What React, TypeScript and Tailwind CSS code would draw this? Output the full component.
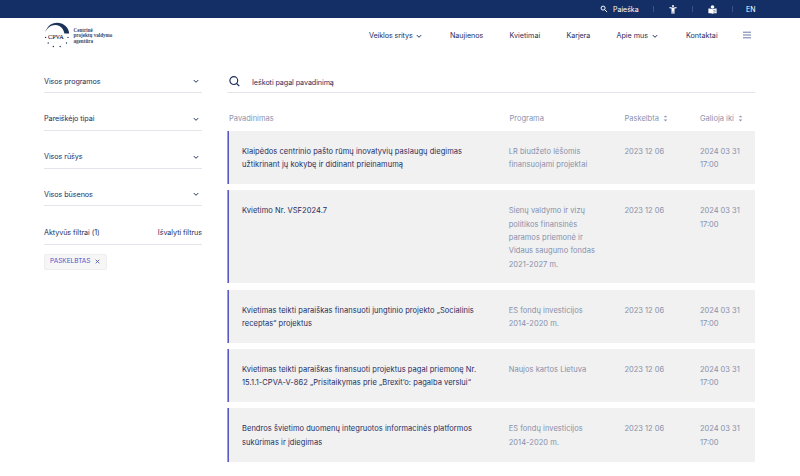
import React from "react";

const calls = [
  {
    title: ["Klaipėdos centrinio pašto rūmų inovatyvių paslaugų diegimas", "užtikrinant jų kokybę ir didinant prieinamumą"],
    program: ["LR biudžeto lėšomis", "finansuojami projektai"],
  },
  {
    title: ["Kvietimo Nr. VSF2024.7"],
    program: ["Sienų valdymo ir vizų", "politikos finansinės", "paramos priemonė ir", "Vidaus saugumo fondas", "2021-2027 m."],
  },
  {
    title: ["Kvietimas teikti paraiškas finansuoti jungtinio projekto „Socialinis", "receptas“ projektus"],
    program: ["ES fondų investicijos", "2014-2020 m."],
  },
  {
    title: ["Kvietimas teikti paraiškas finansuoti projektus pagal priemonę Nr.", "15.1.1-CPVA-V-862 „Prisitaikymas prie „Brexit’o: pagalba verslui“"],
    program: ["Naujos kartos Lietuva"],
  },
  {
    title: ["Bendros švietimo duomenų integruotos informacinės platformos", "sukūrimas ir įdiegimas"],
    program: ["ES fondų investicijos", "2014-2020 m."],
  },
];

const filters = ["Visos programos", "Pareiškėjo tipai", "Visos rūšys", "Visos būsenos"];

function Chevron() {
  return (
    <svg width="6" height="6" viewBox="0 0 6 6" fill="none" stroke="#1f2d60" strokeWidth="1">
      <path d="M0.8 2.1 3 4.3 5.2 2.1" />
    </svg>
  );
}

function Lines({ items }: { items: string[] }) {
  return (
    <div>
      {items.map((t) => (
        <div key={t} className="whitespace-nowrap">{t}</div>
      ))}
    </div>
  );
}

function Sort() {
  return (
    <svg width="5" height="7" viewBox="0 0 5 7" fill="#8d97b6">
      <path d="M.7 2.3 2.5.4l1.8 1.9ZM.7 4.5l1.8 1.9 1.8-1.9Z" />
    </svg>
  );
}

function Logo() {
  return (
    <div className="flex h-[26px] items-start">
      <svg width="27" height="26" viewBox="0 0 27 26" className="shrink-0">
        <path d="M1.2 10.5C3 4.5 7.3.8 13 .8c6.5 0 11.5 4.2 12.2 10.6h-4.8C19.3 6.6 16.4 3.2 11.6 3.1 7 3 3.4 5.8 1.2 10.5Z" fill="#1b3358" />
        <text x="4" y="16.8" fontFamily="'Liberation Serif', serif" fontSize="7" textLength="15.8" lengthAdjust="spacingAndGlyphs" fill="#1b3358" stroke="#1b3358" strokeWidth=".15">CPVA</text>
        <g fill="#1b3358">
          <circle cx="1.6" cy="15.4" r=".7" />
          <circle cx="24" cy="15.4" r=".7" />
          <circle cx="4.2" cy="21" r=".7" />
          <circle cx="22.5" cy="21" r=".7" />
          <circle cx="9.4" cy="24.5" r=".7" />
          <circle cx="16.2" cy="24.5" r=".7" />
        </g>
      </svg>
      <div className="ml-[2.5px] mt-[6px] whitespace-nowrap font-['Liberation_Serif',serif] text-[5.1px] font-bold leading-[5.3px] text-[#35476c]">
        Centrinė<br />projektų valdymo<br />agentūra
      </div>
    </div>
  );
}

export default function App() {
  return (
    <div className="h-[476px] w-[800px] overflow-hidden bg-white font-['Inter','Open_Sans',sans-serif] text-[7.2px] text-[#1f2d60]">
      <div className="flex h-[18px] bg-[#142e66] pl-[600px] text-[7px] text-white">
        <div className="flex w-[53px] items-center">
          <svg width="8" height="8" viewBox="0 0 8 8" fill="none" stroke="white" strokeWidth="1">
            <circle cx="3.1" cy="3.1" r="2" />
            <path d="m4.7 4.7 2.4 2.4" />
          </svg>
          <span className="ml-[5px] pt-[1.5px]">Paieška</span>
        </div>
        <div className="flex w-[39px] items-center">
          <i className="h-[6px] w-px bg-[#3d5282]" />
          <svg width="8" height="9" viewBox="0 0 8 9" className="ml-[15px]" fill="white">
            <circle cx="4" cy="1" r="1" />
            <path d="M.5 2.1 3 2.5h2l2.5-.4v1.1l-2 .4V8.8H4.3V6.4h-.6v2.4H2.5V3.6l-2-.4Z" />
          </svg>
        </div>
        <div className="flex w-[40px] items-center">
          <i className="h-[6px] w-px bg-[#3d5282]" />
          <svg width="9" height="9" viewBox="0 0 9 9" className="ml-[15px]" fill="white">
            <circle cx="4.5" cy="2" r="1.8" />
            <path d="M.4 3.4c1.7 0 3.1.2 4.1.8 1-.6 2.4-.8 4.1-.8v4.8c-1.6 0-3 0-4.1.6-1.1-.6-2.5-.6-4.1-.6Z" />
            <path d="M5.3 5.7 7.6 5.2M5.3 7.2l2.3-.5" stroke="#142e66" strokeWidth=".5" />
          </svg>
        </div>
        <div className="flex items-center">
          <i className="h-[6px] w-px bg-[#3d5282]" />
          <span className="ml-[13px] pt-[1.5px]">EN</span>
        </div>
      </div>

      <header className="flex h-[53px] items-start pl-[44px] pt-[4px]">
        <div className="w-[325px]"><Logo /></div>
        <nav className="flex h-[27px] items-center whitespace-nowrap text-[7.2px]">
          <div className="flex w-[81px] items-center gap-[4px] pt-px"><span className="w-[43px] tracking-[-0.1px]">Veiklos sritys</span><Chevron /></div>
          <div className="w-[59.5px] pt-px tracking-[-0.06px]">Naujienos</div>
          <div className="w-[57px] pt-px">Kvietimai</div>
          <div className="w-[50px] pt-px tracking-[-0.1px]">Karjera</div>
          <div className="flex w-[69.5px] items-center gap-[4px] pt-px"><span className="w-[31.5px]">Apie mus</span><Chevron /></div>
          <div className="w-[57px] pt-px">Kontaktai</div>
          <svg width="8" height="8" viewBox="0 0 8 8" className="mb-px" stroke="#6c7ba5" strokeWidth="1">
            <path d="M0 1.2h8M0 4h8M0 6.8h8" />
          </svg>
        </nav>
      </header>

      <main className="flex pl-[44px]">
        <aside className="w-[158px] text-[7.2px] tracking-[-0.06px]">
          {filters.map((f) => (
            <div key={f} className="mb-[15.8px] flex h-[22px] items-start justify-between border-b border-[#e3e5ea] pr-[3px] pt-[4.5px] leading-[11px]">
              <span>{f}</span>
              <span className="pt-[2.5px]"><Chevron /></span>
            </div>
          ))}
          <div className="flex h-[23px] justify-between border-b border-[#e3e5ea] pt-[5px] leading-[11px]">
            <span>Aktyvūs filtrai (1)</span>
            <span>Išvalyti filtrus</span>
          </div>
          <div className="mt-[8.5px] flex h-[16px] w-[63px] items-center rounded-[2px] border border-[#eeeef0] bg-[#f6f6f7] pl-[5px] text-[6.5px] tracking-normal text-[#5255c8]">
            <span className="w-[45px] pt-px">PASKELBTAS</span>
            <svg width="5" height="5" viewBox="0 0 5 5" stroke="#4448ac" strokeWidth=".8"><path d="m.7.7 3.6 3.6m0-3.6L.7 4.3" /></svg>
          </div>
        </aside>

        <section className="ml-[25px] w-[528px]">
          <div className="flex h-[22px] border-b border-[#e3e5ea] pl-[2px]">
            <svg width="11" height="11" viewBox="0 0 11 11" className="mt-[5px]" fill="none" stroke="#1f2d60" strokeWidth="1.2">
              <circle cx="4.8" cy="4.6" r="3.9" />
              <path d="m7.6 7.5 2.7 2.7" />
            </svg>
            <span className="ml-[12px] mt-[6px] leading-[11px] tracking-[-0.08px]">Ieškoti pagal pavadinimą</span>
          </div>
          <div className="mb-[7px] mt-[20px] flex h-[11px] items-center pl-[2px] text-[7.5px] text-[#8893b2]">
            <div className="w-[280.5px]">Pavadinimas</div>
            <div className="w-[115px]">Programa</div>
            <div className="flex w-[75.5px] items-center gap-[4px]">Paskelbta <Sort /></div>
            <div className="flex items-center gap-[4px] whitespace-nowrap">Galioja iki <Sort /></div>
          </div>
          <div className="flex flex-col gap-[6.2px] leading-[13.3px]">
            {calls.map((c) => (
              <article key={c.title[0]} className="flex bg-[#f1f1f1] text-[7.5px]">
                <i className="w-px shrink-0 bg-[#9c9bdb]" />
                <i className="w-px shrink-0 bg-[#5957c4]" />
                <div className="flex pb-[12.6px] pl-[13px] pt-[14px]">
                  <div className="w-[266.7px] tracking-[0.05px]"><Lines items={c.title} /></div>
                  <div className="w-[115.7px] tracking-[0.04px] text-[#8790ab]"><Lines items={c.program} /></div>
                  <div className="w-[75.5px] text-[#8790ab]">2023 12 06</div>
                  <div className="text-[#8790ab]"><Lines items={["2024 03 31", "17:00"]} /></div>
                </div>
              </article>
            ))}
          </div>
        </section>
      </main>
    </div>
  );
}
